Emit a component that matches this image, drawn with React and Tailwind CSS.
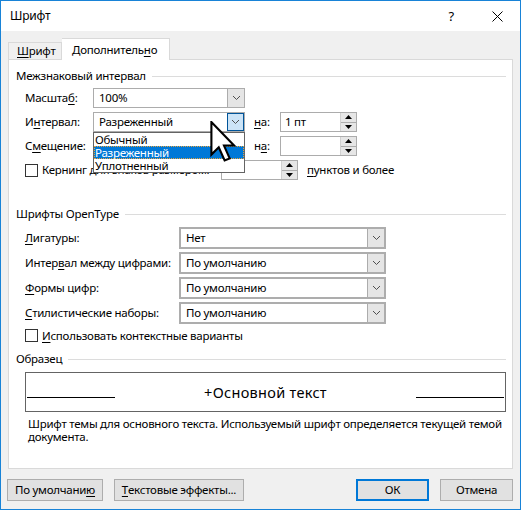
import React from 'react'

const font = { fontFamily: '"Segoe UI", "Noto Sans", "Open Sans", sans-serif' }

const U = ({ children }) => <span className="underline underline-offset-2">{children}</span>

const Chevron = () => (
  <svg width="9" height="6" viewBox="0 0 9 6" className="block">
    <polyline points="1,1 4.5,4.5 8,1" fill="none" stroke="#505050" strokeWidth="1" />
  </svg>
)

const Select = ({ value, width, thick = false, active = false }) => (
  <div
    className={`flex h-full bg-white ${thick ? 'border-2 border-[#adadad]' : 'border border-[#acacac]'}`}
    style={{ width }}
  >
    <div className="flex-1 flex items-center pl-[5px] text-black leading-none">{value}</div>
    <div
      className={`w-[17px] flex items-center justify-center ${
        active ? 'bg-[#cce4f7] border border-[#005499]' : 'bg-[#e5e5e5] border-l border-[#acacac]'
      }`}
    >
      <Chevron />
    </div>
  </div>
)

const Spinner = ({ value = '', width = 77 }) => (
  <div className="flex h-[20px] bg-white border border-[#acacac] relative" style={{ width }}>
    <div className="flex-1 flex items-center pl-[4px] leading-none">{value}</div>
    <div className="w-[16px] flex flex-col bg-[#e6e6e6] border-l border-[#d0d0d0]">
      <div className="flex-1 flex items-center justify-center border-b border-[#acacac]">
        <svg width="7" height="4" viewBox="0 0 7 4"><polygon points="0,4 7,4 3.5,0" fill="#000" /></svg>
      </div>
      <div className="flex-1 flex items-center justify-center">
        <svg width="7" height="4" viewBox="0 0 7 4"><polygon points="0,0 7,0 3.5,4" fill="#000" /></svg>
      </div>
    </div>
  </div>
)

const Checkbox = () => <div className="w-[13px] h-[13px] border border-[#333] bg-white shrink-0" />

const GroupHeader = ({ children, className = '' }) => (
  <div className={`flex items-center h-[16px] pr-[6px] ${className}`}>
    <span className="leading-none text-black whitespace-nowrap">{children}</span>
    <div className="flex-1 h-px bg-[#dcdcdc] ml-[6px]" />
  </div>
)

const Button = ({ children, width, primary = false }) => (
  <button
    className={`h-[22px] flex items-center justify-center text-black bg-[#e1e1e1] ${
      primary ? 'border-2 border-[#0078d7]' : 'border border-[#adadad]'
    }`}
    style={{ width }}
  >
    {children}
  </button>
)

const Cursor = () => (
  <svg width="28" height="42" viewBox="0 0 13 20" className="absolute left-[117px] top-[9px] pointer-events-none z-20">
    <polygon
      points="0.5,0.5 0.5,16 4,12.5 6.8,18.8 9.2,17.8 6.5,11.7 11.3,11.7"
      fill="#fff"
      stroke="#000"
      strokeWidth="1"
      strokeLinejoin="miter"
    />
  </svg>
)

const otRows = [
  [<><U>Л</U>игатуры:</>, 'Нет'],
  [<>Интер<U>в</U>ал между цифрами:</>, 'По умолчанию'],
  [<><U>Ф</U>ормы цифр:</>, 'По умолчанию'],
  [<><U>С</U>тилистические наборы:</>, 'По умолчанию'],
]

export default function App() {
  return (
    <div
      className="w-[521px] h-[510px] flex flex-col border border-[#1883d7] bg-[#f0f0f0] text-black text-[11.5px] tracking-[-0.25px]"
      style={font}
    >
      {/* title bar */}
      <div className="h-[30px] bg-white flex items-center pl-[9px] pr-[17px] shrink-0">
        <span className="text-[12px] leading-none">Шрифт</span>
        <div className="flex-1" />
        <span className="text-[13px] leading-none mr-[38px]">?</span>
        <svg width="11" height="11" viewBox="0 0 11 11">
          <path d="M0.5 0.5 L10.5 10.5 M10.5 0.5 L0.5 10.5" stroke="#000" strokeWidth="1" />
        </svg>
      </div>

      <div className="flex-1 flex flex-col pl-[7px] pr-[7px]">
        {/* tabs */}
        <div className="flex items-end h-[28px] pt-[6px]">
          <div className="h-[17px] w-[54px] flex items-center pl-[8px] border border-b-0 border-[#d9d9d9] bg-[#f0f0f0] leading-none">
            <U>Ш</U>рифт
          </div>
          <div className="h-[22px] w-[108px] flex items-center pl-[10px] border border-b-0 border-l-0 border-[#d9d9d9] bg-white leading-none relative top-px">
            Дополнитель<U>н</U>о
          </div>
        </div>

        {/* panel */}
        <div className="h-[410px] w-[505px] bg-white border border-[#d9d9d9] flex flex-col pl-[7px]">
          <GroupHeader className="mt-[8px]">Межзнаковый интервал</GroupHeader>

          <div className="flex flex-col gap-[4px] mt-[4px] pl-[9px] leading-none">
            <div className="flex items-center h-[20px]">
              <div className="w-[68px]">Масшта<U>б</U>:</div>
              <Select value="100%" width={152} />
            </div>

            <div className="flex items-center h-[20px] relative z-10">
              <div className="w-[68px]">И<U>н</U>тервал:</div>
              <div className="relative h-full">
                <Select value="Разреженный" width={152} active />
                <div className="absolute left-0 top-[20px] w-[152px] bg-white border border-[#646464] flex flex-col">
                  <div className="h-[13px] flex items-center pl-[1px]">Обычный</div>
                  <div className="h-[13px] flex items-center pl-[1px] bg-[#0078d7] text-white outline outline-1 outline-dotted outline-[#e8a33c] -outline-offset-1">
                    Разреженный
                  </div>
                  <div className="h-[13px] flex items-center pl-[1px]">Уплотненный</div>
                </div>
                <Cursor />
              </div>
              <div className="w-[26px] ml-[9px]"><U>н</U>а:</div>
              <Spinner value="1 пт" />
            </div>

            <div className="flex items-center h-[20px]">
              <div className="w-[68px]">С<U>м</U>ещение:</div>
              <div className="w-[152px]" />
              <div className="w-[26px] ml-[9px]">н<U>а</U>:</div>
              <Spinner />
            </div>

            <div className="flex items-center h-[20px]">
              <Checkbox />
              <div className="ml-[4px] w-[179px] whitespace-nowrap overflow-hidden"><U>К</U>ернинг для знаков размером:</div>
              <Spinner />
              <div className="ml-[9px]"><U>п</U>унктов и более</div>
            </div>
          </div>

          <GroupHeader className="mt-[26px]">Шрифты OpenType</GroupHeader>

          <div className="flex flex-col gap-[3px] mt-[5px] pl-[9px] leading-none">
            {otRows.map(([label, value], i) => (
              <div key={i} className="flex items-center h-[22px]">
                <div className="w-[154px] whitespace-nowrap">{label}</div>
                <Select value={value} width={207} thick />
              </div>
            ))}
            <div className="flex items-center h-[13px] mt-[2px]">
              <Checkbox />
              <div className="ml-[4px]"><U>И</U>спользовать контекстные варианты</div>
            </div>
          </div>

          <GroupHeader className="mt-[9px]">Образец</GroupHeader>

          <div className="ml-[9px] mr-[6px] mt-[5px] h-[40px] border border-[#646464] flex items-center px-[1px]">
            <div className="w-[88px] h-px bg-black mt-[10px]" />
            <div className="flex-1 text-center text-[14.5px] tracking-[0.3px] leading-none">+Основной текст</div>
            <div className="w-[88px] h-px bg-black mt-[10px]" />
          </div>

          <div className="ml-[12px] mr-[8px] mt-[5px] leading-[13px]">
            Шрифт темы для основного текста. Используемый шрифт определяется текущей темой документа.
          </div>
        </div>

        {/* buttons */}
        <div className="flex items-center mt-[10px]">
          <div className="-ml-px flex gap-[11px]">
            <Button width={96}>По умолчани<U>ю</U></Button>
            <Button width={130}><U>Т</U>екстовые эффекты...</Button>
          </div>
          <div className="flex-1" />
          <div className="flex gap-[11px]">
            <Button width={73} primary>ОК</Button>
            <Button width={73}>Отмена</Button>
          </div>
        </div>
      </div>
    </div>
  )
}
